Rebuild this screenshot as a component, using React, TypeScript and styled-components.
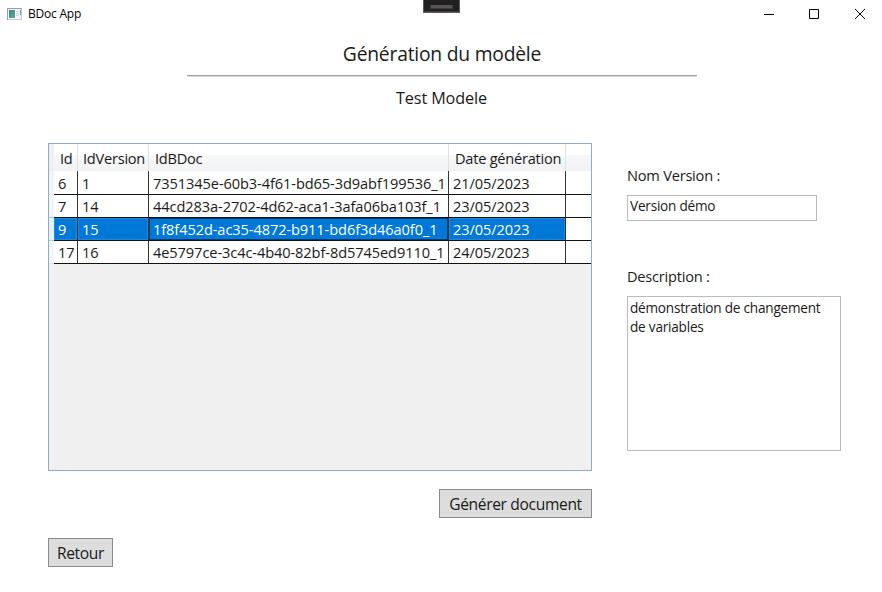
import React from 'react';
import styled, { createGlobalStyle, css } from 'styled-components';

const GlobalStyle = createGlobalStyle`
  * { box-sizing: border-box; }
  body { margin: 0; background: #fff; }
`;

const Window = styled.div`
  position: relative;
  width: 882px;
  height: 592px;
  overflow: hidden;
  background: #fff;
  color: #1a1a1a;
  font-family: "Open Sans", "Noto Sans", sans-serif;
  white-space: nowrap;
`;

const TitleBar = styled.header`
  display: flex;
  align-items: center;
  height: 28px;
  padding-left: 7px;
  color: #000;
`;

const AppName = styled.span`
  flex: 1;
  margin-left: 6px;
  font-size: 12px;
  line-height: 28px;
  letter-spacing: -0.22px;
`;

const WindowControls = styled.div`
  display: flex;
  width: 136px;
`;

const ControlIcon = styled.svg`
  display: block;
  flex: none;
  width: 45px;
  height: 28px;
  fill: none;
  stroke: #000;
`;

const DebugHandle = styled.div`
  position: absolute;
  top: 0;
  left: 423px;
  width: 37px;
  height: 13px;
  padding: 5px 6px 0;
  background: #202020;
  border: 1px solid #5f5b5c;
  border-top: 0;
  box-shadow: inset 0 -1px #403c3d;
  &::after {
    content: "";
    display: block;
    height: 3px;
    background: #555;
    border: 1px solid #3c3c3c;
    border-width: 0 1px 1px;
  }
`;

const Heading = styled.div`
  width: 510px;
  margin: 7px 0 0 187px;
  text-align: center;
`;

const Title = styled.h1`
  height: 41px;
  margin: 0;
  border-bottom: 1px solid #a0a0a0;
  box-shadow: 0 1px #dedede;
  font-size: 19.3px;
  font-weight: 400;
  line-height: 38px;
  letter-spacing: -0.22px;
`;

const Subtitle = styled.h2`
  margin: 8px 0 0 -1px;
  font-size: 16.2px;
  font-weight: 400;
  line-height: 29px;
  letter-spacing: -0.1px;
`;

const Content = styled.main`
  display: flex;
  gap: 35px;
  margin: 30px 0 0 48px;
`;

const GridColumn = styled.section`
  display: flex;
  flex-direction: column;
  width: 544px;
`;

const DataGrid = styled.div`
  height: 328px;
  border: 1px solid #91aac5;
  background: #f0f0f0;
`;

const columns = '5px 24px 71px 300px 117px 25px';

const HeaderRow = styled.div`
  display: grid;
  grid-template-columns: ${columns};
  grid-template-rows: 100%;
  height: 27px;
  background: linear-gradient(#fff 0 40%, #f7f8fa 41%, #f1f2f4);
`;

const HeaderCell = styled.div`
  padding-left: 6px;
  border-right: 1px solid #dfe1e5;
  font-size: 14.6px;
  line-height: 29px;
  letter-spacing: -0.24px;
  &:nth-child(3) { padding-left: 5px; }
  &:last-child { border-right: 0; }
`;

const HeaderCorner = styled.div`
  background: #f0f0f0;
`;

const Row = styled.div<{ $first?: boolean }>`
  display: grid;
  grid-template-columns: ${columns};
  grid-template-rows: 100%;
  height: ${p => (p.$first ? 24 : 23)}px;
`;

const RowHeader = styled.div<{ $selected: boolean }>`
  border-bottom: 1px solid ${p => (p.$selected ? '#9bd6ef' : '#dfe3e7')};
  background: ${p => (p.$selected ? '#e2f3fb' : '#f4f5f6')};
  ${p => p.$selected && css`box-shadow: 0 -1px #9bd6ef;`}
`;

const Cell = styled.div<{ $selected: boolean; $current?: boolean; $first?: boolean }>`
  padding-left: 4px;
  border-right: 1px solid #333;
  border-bottom: 1px solid #111;
  background: ${p => (p.$selected ? '#0078d7' : '#fff')};
  color: ${p => (p.$selected ? '#fff' : '#1a1a1a')};
  font-size: 14.6px;
  line-height: ${p => (p.$first ? 25 : 23)}px;
  letter-spacing: -0.09px;
  ${p => p.$selected && css`box-shadow: inset 0 0 0 1px ${p.$current ? '#063d73' : '#2388dc'};`}
`;

const EdgeCell = styled.div`
  border-bottom: 1px solid #111;
  background: #fff;
`;

const Button = styled.button<{ $width: number; $height: number }>`
  width: ${p => p.$width}px;
  height: ${p => p.$height}px;
  padding: 1px 0 0;
  border: 1px solid #8a8a8a;
  background: #ddd;
  color: #1a1a1a;
  font-family: inherit;
  font-size: 15.6px;
  line-height: 24px;
  letter-spacing: -0.35px;
`;

const GenerateButton = styled(Button)`
  align-self: flex-end;
  margin-top: 18px;
`;

const BackButton = styled(Button)`
  display: block;
  margin: 20px 0 0 48px;
`;

const Form = styled.section`
  width: 214px;
  padding-top: 21px;
`;

const Label = styled.label`
  display: block;
  height: 31px;
  font-size: 14.6px;
  line-height: 22px;
  letter-spacing: -0.22px;
`;

const TextField = styled.div<{ $width: number; $height: number }>`
  width: ${p => p.$width}px;
  height: ${p => p.$height}px;
  padding: 0 2px;
  border: 1px solid #b9bbc0;
  font-size: 13.6px;
  line-height: 19px;
  letter-spacing: -0.22px;
`;

const DescriptionField = styled.div`
  margin-top: 44px;
`;

const DescriptionText = styled(TextField)`
  padding-top: 1px;
  white-space: pre-wrap;
`;

const rows = [
  ['6', '1', '7351345e-60b3-4f61-bd65-3d9abf199536_1', '21/05/2023'],
  ['7', '14', '44cd283a-2702-4d62-aca1-3afa06ba103f_1', '23/05/2023'],
  ['9', '15', '1f8f452d-ac35-4872-b911-bd6f3d46a0f0_1', '23/05/2023'],
  ['17', '16', '4e5797ce-3c4c-4b40-82bf-8d5745ed9110_1', '24/05/2023'],
];
const selectedId = '9';

function AppIcon() {
  return (
    <svg width="15" height="12" viewBox="0 0 15 12" shapeRendering="crispEdges">
      <defs>
        <linearGradient id="pane" x1="0" y1="0" x2="1" y2="1">
          <stop offset="0" stopColor="#3b7c9d" />
          <stop offset="1" stopColor="#5fb384" />
        </linearGradient>
      </defs>
      <rect width="15" height="12" fill="#9c9ca3" />
      <rect x="1" y="1" width="14" height="11" fill="#c9c9ce" />
      <rect x="1" y="1" width="13" height="10" fill="#f3f4f7" />
      <rect x="2" y="2" width="6" height="8" fill="url(#pane)" />
      <rect x="9" y="3" width="3" height="1" fill="#d5d9dd" />
      <rect x="9" y="5" width="3" height="1" fill="#d5d9dd" />
      <rect x="9" y="7" width="3" height="1" fill="#d5d9dd" />
      <rect x="13" y="2" width="1" height="5" fill="#64a99b" />
    </svg>
  );
}

export default function App() {
  return (
    <Window>
      <GlobalStyle />
      <TitleBar>
        <AppIcon />
        <AppName>BDoc App</AppName>
        <WindowControls>
          <ControlIcon viewBox="0 0 45 28"><path d="M18 14.5h10" /></ControlIcon>
          <ControlIcon viewBox="0 0 45 28"><path d="M18.5 9.5h9v9h-9z" /></ControlIcon>
          <ControlIcon viewBox="0 0 45 28"><path d="M19 9l10 10M29 9l-10 10" /></ControlIcon>
        </WindowControls>
      </TitleBar>
      <DebugHandle />
      <Heading>
        <Title>Génération du modèle</Title>
        <Subtitle>Test Modele</Subtitle>
      </Heading>
      <Content>
        <GridColumn>
          <DataGrid>
            <HeaderRow>
              <HeaderCorner />
              <HeaderCell>Id</HeaderCell>
              <HeaderCell>IdVersion</HeaderCell>
              <HeaderCell>IdBDoc</HeaderCell>
              <HeaderCell>Date génération</HeaderCell>
              <HeaderCell />
            </HeaderRow>
            {rows.map((row, r) => {
              const selected = row[0] === selectedId;
              return (
                <Row key={row[0]} $first={r === 0}>
                  <RowHeader $selected={selected} />
                  {row.map((value, c) => (
                    <Cell key={c} $selected={selected} $current={c === 2} $first={r === 0}>{value}</Cell>
                  ))}
                  <EdgeCell />
                </Row>
              );
            })}
          </DataGrid>
          <GenerateButton $width={153} $height={29}>Générer document</GenerateButton>
        </GridColumn>
        <Form>
          <Label>Nom Version :</Label>
          <TextField $width={190} $height={26}>Version démo</TextField>
          <DescriptionField>
            <Label>Description :</Label>
            <DescriptionText $width={214} $height={155}>{'démonstration de changement\nde variables'}</DescriptionText>
          </DescriptionField>
        </Form>
      </Content>
      <BackButton $width={65} $height={29}>Retour</BackButton>
    </Window>
  );
}
